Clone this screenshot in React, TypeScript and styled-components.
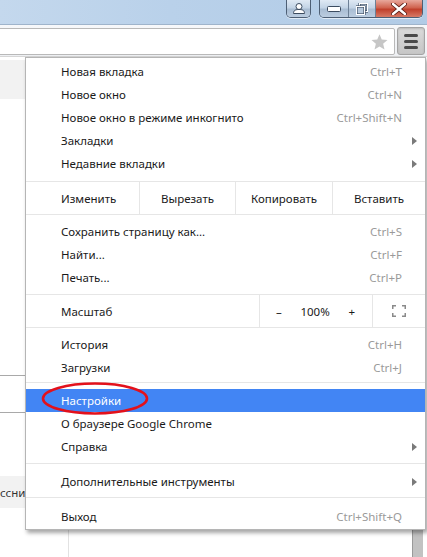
import React from "react";
import styled, { createGlobalStyle } from "styled-components";

const GlobalStyle = createGlobalStyle`
  html, body {
    margin: 0;
    padding: 0;
    overflow: hidden;
    background: #ffffff;
  }
  * { box-sizing: border-box; }
`;

const Window = styled.div`
  width: 427px;
  height: 557px;
  display: flex;
  flex-direction: column;
  font-family: "Noto Sans", "Open Sans", sans-serif;
  overflow: hidden;
`;

const TitleBar = styled.div`
  height: 25px;
  flex: none;
  display: flex;
  justify-content: flex-end;
  align-items: flex-start;
  padding-right: 4px;
  gap: 8px;
  background: linear-gradient(90deg, #c4d8ed 0%, #b9d1ea 40%, #b1cbe6 100%);
  border-bottom: 1px solid #9fb4cb;
`;

const CaptionGroup = styled.div`
  display: flex;
  height: 18px;
  border: 1px solid #4d5f75;
  border-top: none;
  border-radius: 0 0 5px 5px;
  overflow: hidden;
  box-shadow: 0 1px 0 rgba(255, 255, 255, 0.6);
`;

const CaptionButton = styled.div<{ $w: number; $close?: boolean }>`
  width: ${(p) => p.$w}px;
  height: 100%;
  display: flex;
  align-items: center;
  justify-content: center;
  border-left: 1px solid #6d8096;
  &:first-child { border-left: none; }
  background: ${(p) =>
    p.$close
      ? "linear-gradient(180deg, #e8a89c 0%, #d0634f 45%, #c0402c 55%, #d77a66 100%)"
      : "linear-gradient(180deg, #dfe9f4 0%, #c3d4e6 45%, #a9bdd3 55%, #bccde0 100%)"};
`;

const Toolbar = styled.div`
  height: 31px;
  flex: none;
  display: flex;
  align-items: center;
  gap: 2px;
  padding-right: 2px;
  background: linear-gradient(180deg, #f7f8fa 0%, #eef0f3 100%);
`;

const Omnibox = styled.div`
  flex: 1;
  height: 27px;
  margin-left: -3px;
  margin-top: 2px;
  display: flex;
  align-items: center;
  justify-content: flex-end;
  padding-right: 6px;
  background: #ffffff;
  border: 1px solid #b9b9b9;
  border-radius: 0 2px 2px 0;
`;

const MenuButton = styled.div`
  width: 28px;
  height: 28px;
  margin-top: 1px;
  display: flex;
  flex-direction: column;
  align-items: center;
  justify-content: center;
  gap: 3px;
  border: 1px solid #a4a4a4;
  border-radius: 3px;
  background: linear-gradient(180deg, #dadada 0%, #c6c6c6 100%);
  box-shadow: inset 0 1px 2px rgba(0, 0, 0, 0.15);
`;

const Bar = styled.span`
  width: 14px;
  height: 3px;
  border-radius: 1.5px;
  background: #4a4a4a;
`;

const Page = styled.div`
  flex: 1;
  position: relative;
  display: flex;
  border-top: 1px solid #d6d6d6;
`;

const LeftPane = styled.div`
  width: 69px;
  flex: none;
  display: flex;
  flex-direction: column;
  border-right: 1px solid #e2e2e2;
`;

const GrayBand = styled.div<{ $h: number; $mt: number }>`
  height: ${(p) => p.$h}px;
  margin-top: ${(p) => p.$mt}px;
  background: #f2f2f2;
  font-size: 11.5px;
  color: #333;
  display: flex;
  align-items: center;
  white-space: nowrap;
  overflow: hidden;
`;

const Rule = styled.div<{ $mt: number }>`
  height: 1px;
  margin-top: ${(p) => p.$mt}px;
  background: #a9a9a9;
`;

const Content = styled.div`
  flex: 1;
`;

const ScrollTrack = styled.div`
  width: 15px;
  flex: none;
  display: flex;
  justify-content: flex-start;
`;

const ScrollThumb = styled.div`
  width: 11px;
  margin-top: 472px;
  height: 40px;
  background: #c2c2c2;
  border-left: 1px solid #9a9a9a;
`;

/* dropdown menu */

const Menu = styled.div`
  position: absolute;
  left: 25px;
  top: 0px;
  width: 401px;
  background: #ffffff;
  border: 1px solid #b5b5b5;
  box-shadow: 2px 3px 4px rgba(0, 0, 0, 0.35);
  font-size: 11.5px;
  color: #1a1a1a;
`;

const Section = styled.div<{ $pt: number; $pb: number }>`
  padding: ${(p) => p.$pt}px 0 ${(p) => p.$pb}px;
  border-top: 1px solid #e6e6e6;
  &:first-child { border-top: none; }
`;

const Item = styled.div<{ $active?: boolean }>`
  height: 23px;
  display: flex;
  align-items: center;
  padding: 0 8px 0 35px;
  background: ${(p) => (p.$active ? "#4285f4" : "transparent")};
  color: ${(p) => (p.$active ? "#ffffff" : "#1a1a1a")};
`;

const Label = styled.span`
  flex: 1;
  white-space: nowrap;
`;

const Shortcut = styled.span`
  color: #9a9a9a;
  margin-right: 15px;
`;

const Arrow = styled.span`
  width: 0;
  height: 0;
  border-top: 4px solid transparent;
  border-bottom: 4px solid transparent;
  border-left: 5px solid #7a7a7a;
`;

const ButtonRow = styled.div`
  height: 33px;
  display: flex;
  border-top: 1px solid #e6e6e6;
`;

const Cell = styled.div<{ $w: number; $align?: string; $pl?: number }>`
  width: ${(p) => p.$w}px;
  flex: none;
  display: flex;
  align-items: center;
  justify-content: ${(p) => p.$align || "center"};
  padding-left: ${(p) => p.$pl || 0}px;
  border-left: 1px solid #e6e6e6;
  &:first-child { border-left: none; }
  white-space: nowrap;
`;

const ZoomControls = styled.div`
  display: flex;
  align-items: center;
  width: 100%;
  padding: 0 17px 0 16px;
  justify-content: space-between;
`;

const Annotation = styled.svg`
  position: absolute;
  left: 40px;
  top: 324px;
  pointer-events: none;
`;

const PersonIcon = () => (
  <svg width="14" height="11" viewBox="0 0 14 11">
    <circle cx="7" cy="3.5" r="3" fill="#fff" stroke="#3c4c60" strokeWidth="1" />
    <path d="M1.5 10.5 C1.5 7 4 6.5 7 6.5 S12.5 7 12.5 10.5 Z" fill="#fff" stroke="#3c4c60" strokeWidth="1" />
  </svg>
);

const MinIcon = () => (
  <svg width="14" height="6" viewBox="0 0 14 6">
    <rect x="0.5" y="0.5" width="13" height="5" rx="1" fill="#fff" stroke="#3c4c60" />
  </svg>
);

const RestoreIcon = () => (
  <svg width="12" height="12" viewBox="0 0 12 12">
    <rect x="3.5" y="0.5" width="8" height="8" fill="none" stroke="#3c4c60" strokeWidth="2.2" />
    <rect x="3.5" y="0.5" width="8" height="8" fill="none" stroke="#fff" strokeWidth="1" />
    <rect x="0.5" y="3.5" width="8" height="8" fill="#b7c9dc" stroke="#3c4c60" strokeWidth="2.2" />
    <rect x="0.5" y="3.5" width="8" height="8" fill="none" stroke="#fff" strokeWidth="1" />
  </svg>
);

const CloseIcon = () => (
  <svg width="16" height="12" viewBox="0 0 16 12">
    <path d="M2 1 L14 11 M14 1 L2 11" stroke="#5a1e16" strokeWidth="4.2" strokeLinecap="round" />
    <path d="M2 1 L14 11 M14 1 L2 11" stroke="#ffffff" strokeWidth="2.4" strokeLinecap="round" />
  </svg>
);

const StarIcon = () => (
  <svg width="17" height="16" viewBox="0 0 24 23">
    <polygon
      points="12,0.5 15.2,8 23.5,8.6 17.2,14 19.2,22.3 12,17.8 4.8,22.3 6.8,14 0.5,8.6 8.8,8"
      fill="#c6c6c6"
    />
  </svg>
);

const FullscreenIcon = () => (
  <svg width="14" height="12" viewBox="0 0 14 12">
    <path
      d="M0.75 4 V0.75 H4 M10 0.75 H13.25 V4 M13.25 8 V11.25 H10 M4 11.25 H0.75 V8"
      fill="none"
      stroke="#8a8a8a"
      strokeWidth="1.5"
    />
  </svg>
);

type Row = { label: string; shortcut?: string; sub?: boolean; active?: boolean };
type Group = { pt: number; pb: number; rows: Row[] };

const groups: Group[] = [
  {
    pt: 2,
    pb: 6,
    rows: [
      { label: "Новая вкладка", shortcut: "Ctrl+T" },
      { label: "Новое окно", shortcut: "Ctrl+N" },
      { label: "Новое окно в режиме инкогнито", shortcut: "Ctrl+Shift+N" },
      { label: "Закладки", sub: true },
      { label: "Недавние вкладки", sub: true },
    ],
  },
  {
    pt: 5,
    pb: 5,
    rows: [
      { label: "Сохранить страницу как...", shortcut: "Ctrl+S" },
      { label: "Найти...", shortcut: "Ctrl+F" },
      { label: "Печать...", shortcut: "Ctrl+P" },
    ],
  },
  {
    pt: 5,
    pb: 3,
    rows: [
      { label: "История", shortcut: "Ctrl+H" },
      { label: "Загрузки", shortcut: "Ctrl+J" },
    ],
  },
  {
    pt: 6,
    pb: 5,
    rows: [
      { label: "Настройки", active: true },
      { label: "О браузере Google Chrome" },
      { label: "Справка", sub: true },
    ],
  },
  { pt: 6, pb: 4, rows: [{ label: "Дополнительные инструменты", sub: true }] },
  { pt: 7, pb: 1, rows: [{ label: "Выход", shortcut: "Ctrl+Shift+Q" }] },
];

const MenuSection: React.FC<{ group: Group }> = ({ group }) => (
  <Section $pt={group.pt} $pb={group.pb}>
    {group.rows.map((r) => (
      <Item key={r.label} $active={r.active}>
        <Label>{r.label}</Label>
        {r.shortcut && <Shortcut>{r.shortcut}</Shortcut>}
        {r.sub && <Arrow />}
      </Item>
    ))}
  </Section>
);

export default function App() {
  return (
    <>
      <GlobalStyle />
      <Window>
        <TitleBar>
          <CaptionGroup>
            <CaptionButton $w={23}>
              <PersonIcon />
            </CaptionButton>
          </CaptionGroup>
          <CaptionGroup>
            <CaptionButton $w={28}>
              <MinIcon />
            </CaptionButton>
            <CaptionButton $w={27}>
              <RestoreIcon />
            </CaptionButton>
            <CaptionButton $w={47} $close>
              <CloseIcon />
            </CaptionButton>
          </CaptionGroup>
        </TitleBar>
        <Toolbar>
          <Omnibox>
            <StarIcon />
          </Omnibox>
          <MenuButton>
            <Bar />
            <Bar />
            <Bar />
          </MenuButton>
        </Toolbar>
        <Page>
          <LeftPane>
            <GrayBand $h={39} $mt={3} />
            <Rule $mt={276} />
            <Rule $mt={36} />
            <GrayBand $h={32} $mt={63}>
              ссники
            </GrayBand>
          </LeftPane>
          <Content />
          <ScrollTrack>
            <ScrollThumb />
          </ScrollTrack>

          <Menu>
            <MenuSection group={groups[0]} />
            <ButtonRow>
              <Cell $w={113} $align="flex-start" $pl={35}>
                Изменить
              </Cell>
              <Cell $w={96}>Вырезать</Cell>
              <Cell $w={97}>Копировать</Cell>
              <Cell $w={93}>Вставить</Cell>
            </ButtonRow>
            <MenuSection group={groups[1]} />
            <ButtonRow>
              <Cell $w={233} $align="flex-start" $pl={35}>
                Масштаб
              </Cell>
              <Cell $w={113}>
                <ZoomControls>
                  <span>–</span>
                  <span>100%</span>
                  <span>+</span>
                </ZoomControls>
              </Cell>
              <Cell $w={53}>
                <FullscreenIcon />
              </Cell>
            </ButtonRow>
            {groups.slice(2).map((g, i) => (
              <MenuSection key={i} group={g} />
            ))}
          </Menu>

          <Annotation width="112" height="36" viewBox="0 0 112 36">
            <ellipse cx="55" cy="17.5" rx="52" ry="15" fill="none" stroke="#e3111b" strokeWidth="2.6" />
          </Annotation>
        </Page>
      </Window>
    </>
  );
}
